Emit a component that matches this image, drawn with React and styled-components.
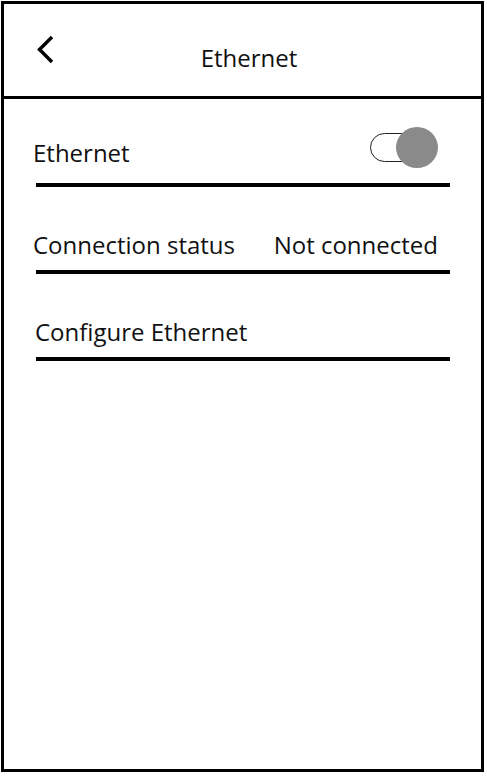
import React from "react"
import styled, { createGlobalStyle } from "styled-components"

const GlobalStyle = createGlobalStyle`
	html, body {
		margin: 0;
		padding: 0;
		background: #fff;
	}
	body {
		font-family: "Open Sans", "Noto Sans", sans-serif;
		color: #111;
	}
`

const Frame = styled.div`
	box-sizing: border-box;
	margin: 1px 0 0 1px;
	width: 483px;
	height: 771px;
	border: 3px solid #000;
	display: flex;
	flex-direction: column;
`

const Header = styled.header`
	position: relative;
	box-sizing: content-box;
	height: 66px;
	border-bottom: 3px solid #000;
	display: flex;
	align-items: flex-end;
	justify-content: center;
	padding: 0 0 26px 13px;
`

const BackButton = styled.button`
	position: absolute;
	left: 30px;
	top: 31px;
	width: 22px;
	height: 30px;
	padding: 0;
	border: 0;
	background: none;
	cursor: pointer;
	display: flex;
`

const Title = styled.h1`
	margin: 0;
	font-size: 24px;
	font-weight: 400;
	line-height: 1;
`

const List = styled.div`
	display: flex;
	flex-direction: column;
`

const Row = styled.div`
	height: ${p => p.$height || 83}px;
	display: flex;
	align-items: flex-end;
	justify-content: space-between;
	padding: 0 43px ${p => p.$bottom || 13}px ${p => p.$left || 29}px;
	box-sizing: border-box;
	font-size: 24px;
	line-height: 1;
`

const Rule = styled.div`
	height: 4px;
	margin: 0 31px 0 32px;
	background: #000;
`

const Switch = styled.div`
	position: relative;
	width: 68px;
	height: 41px;
	margin-bottom: -3px;
`

const Track = styled.div`
	position: absolute;
	left: 0;
	top: 6px;
	width: 48px;
	height: 29px;
	box-sizing: border-box;
	border: 1.5px solid #222;
	border-radius: 15px;
	background: #fff;
`

const Knob = styled.div`
	position: absolute;
	right: 0;
	top: 0;
	width: 42px;
	height: 41px;
	border-radius: 50%;
	background: #8a8a8a;
`

const Chevron = () => (
	<svg width="22" height="30" viewBox="0 0 22 30" fill="none">
		<path d="M18 2 L5.5 14.5 L18 27" stroke="#000" strokeWidth="3.4" strokeLinejoin="miter" />
	</svg>
)

const App = () => (
	<>
		<GlobalStyle />
		<Frame>
			<Header>
				<BackButton aria-label="Back">
					<Chevron />
				</BackButton>
				<Title>Ethernet</Title>
			</Header>
			<List>
				<Row $height={84} $bottom={18}>
					<span>Ethernet</span>
					<Switch>
						<Track />
						<Knob />
					</Switch>
				</Row>
				<Rule />
				<Row>
					<span>Connection status</span>
					<span>Not connected</span>
				</Row>
				<Rule />
				<Row $left={31}>
					<span>Configure Ethernet</span>
				</Row>
				<Rule />
			</List>
		</Frame>
	</>
)

export default App
